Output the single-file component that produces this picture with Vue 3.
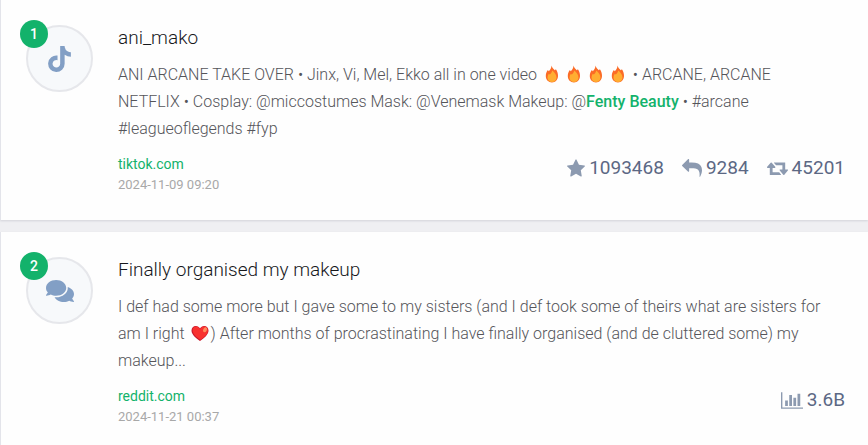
<script setup>
const icons = {
  tiktok: {
    box: '0 0 448 512',
    d: 'M448 209.91a210.06 210.06 0 0 1-122.77-39.25V349.38A162.55 162.55 0 1 1 185 188.31V278.2a74.62 74.62 0 1 0 52.23 71.18V0l88 0a121.18 121.18 0 0 0 1.86 22.17A122.18 122.18 0 0 0 381 102.39a121.43 121.43 0 0 0 67 20.14Z',
  },
  comments: {
    box: '0 32 576 448',
    d: 'M416 192c0-88.4-93.1-160-208-160S0 103.6 0 192c0 34.3 14.1 65.9 38 92-13.4 30.2-35.5 54.2-35.8 54.5-2.2 2.3-2.8 5.7-1.5 8.7S4.8 352 8 352c36.6 0 66.9-12.3 88.7-25 32.2 15.7 70.3 25 111.3 25 114.9 0 208-71.6 208-160zm122 220c23.9-26 38-57.7 38-92 0-66.9-53.5-124.2-129.3-148.1.9 6.6 1.3 13.3 1.3 20.1 0 105.9-107.7 192-240 192-10.8 0-21.3-.8-31.7-1.9C207.8 439.6 281.8 480 368 480c41 0 79.1-9.2 111.3-25 21.8 12.7 52.1 25 88.7 25 3.2 0 6.1-1.9 7.3-4.8 1.3-2.9.7-6.3-1.5-8.7-.3-.3-22.4-24.2-35.8-54.5z',
  },
  star: {
    box: '64 0 1664 1664',
    d: 'M1728 647q0 22-26 48l-363 354 86 500q1 7 1 20 0 21-10.5 35.5t-30.5 14.5q-19 0-40-12l-449-236-449 236q-22 12-40 12-21 0-31.5-14.5t-10.5-35.5q0-6 2-20l86-500-364-354q-25-27-25-48 0-37 56-46l502-73 225-455q19-41 49-41t49 41l225 455 502 73q56 9 56 46z',
  },
  reply: {
    box: '0 100 1792 1550',
    flip: 'matrix(-1 0 0 1 1792 0)',
    d: 'M1792 640q0 26-19 45l-512 512q-19 19-45 19t-45-19-19-45v-256h-224q-98 0-175.5 6t-154 21.5-133 42.5-105.5 69.5-80 101-48.5 138.5-17.5 181q0 55 5 123 0 6 2.5 23.5t2.5 26.5q0 15-8.5 25t-23.5 10q-16 0-28-17-7-9-13-22t-13.5-30-10.5-24q-127-285-127-451 0-199 53-333 162-403 875-403h224v-256q0-26 19-45t45-19 45 19l512 512q19 19 19 45z',
  },
  retweet: {
    box: '0 256 1920 1280',
    d: 'M1280 1504q0 13-9.5 22.5t-22.5 9.5h-960q-8 0-13.5-2t-9-7-5.5-8-3-11.5-1-11.5v-600h-192q-26 0-45-19t-19-45q0-24 15-41l320-384q19-22 49-22t49 22l320 384q15 17 15 41 0 26-19 45t-45 19h-192v384h576q16 0 25 11l160 192q7 10 7 21zm640-416q0 24-15 41l-320 384q-20 23-49 23t-49-23l-320-384q-15-17-15-41 0-26 19-45t45-19h192v-384h-576q-16 0-25-12l-160-192q-7-9-7-20 0-13 9.5-22.5t22.5-9.5h960q8 0 13.5 2t9 7 5.5 8 3 11.5 1 11.5v600h192q26 0 45 19t19 45z',
  },
  chart: {
    box: '0 128 2048 1536',
    d: 'M640 896v512h-256v-512h256zm384-512v1024h-256v-1024h256zm1024 1152v128h-2048v-1536h128v1408h1920zm-640-896v768h-256v-768h256zm384-384v1152h-256v-1152h256z',
  },
}

const posts = [
  {
    rank: 1,
    icon: 'tiktok',
    title: 'ani_mako',
    body: [
      { text: 'ANI ARCANE TAKE OVER • Jinx, Vi, Mel, Ekko all in one video ' },
      { emoji: 'fire' },
      { emoji: 'fire' },
      { emoji: 'fire' },
      { emoji: 'fire' },
      { text: ' • ARCANE, ARCANE NETFLIX • Cosplay: @miccostumes Mask: @Venemask Makeup: @' },
      { mark: 'Fenty Beauty' },
      { text: ' • #arcane #leagueoflegends #fyp' },
    ],
    site: 'tiktok.com',
    date: '2024-11-09 09:20',
    stats: [
      { icon: 'star', value: '1093468' },
      { icon: 'reply', value: '9284' },
      { icon: 'retweet', value: '45201' },
    ],
  },
  {
    rank: 2,
    icon: 'comments',
    title: 'Finally organised my makeup',
    body: [
      { text: 'I def had some more but I gave some to my sisters (and I def took some of theirs what are sisters for am I right ' },
      { emoji: 'heart' },
      { text: ') After months of procrastinating I have finally organised (and de cluttered some) my makeup...' },
    ],
    site: 'reddit.com',
    date: '2024-11-21 00:37',
    stats: [{ icon: 'chart', value: '3.6B' }],
  },
]
</script>

<template>
  <main class="feed">
    <article v-for="post in posts" :key="post.rank" class="card">
      <div class="avatar">
        <svg :class="['source', post.icon]" :viewBox="icons[post.icon].box" aria-hidden="true">
          <path :d="icons[post.icon].d" />
        </svg>
        <span class="rank">{{ post.rank }}</span>
      </div>
      <div class="content">
        <h2 class="title">{{ post.title }}</h2>
        <p class="body"><template v-for="(part, i) in post.body" :key="i"><svg v-if="part.emoji === 'fire'" class="emoji" viewBox="0 0 22 18" role="img" aria-label="fire"><path fill="#fb6b26" d="M10.6 0.5C10.9 2.8 12.6 3.7 13.8 5.3L14.9 4.2C16.3 6.2 17.1 8.5 17 11C16.8 14.9 14.3 17.4 11 17.4C7.4 17.4 4.9 14.9 4.8 11.3C4.7 8.8 5.6 6.7 6.9 5L7.8 6.2C9.4 4.7 10.3 3 10.6 0.5Z" /><path fill="#ffad31" d="M11.2 5.5C13.6 7.7 15.5 9.5 15.5 12.4C15.5 15.1 13.7 16.9 11 16.9C8.3 16.9 6.5 15.1 6.5 12.4C6.5 11 7 9.8 7.8 8.7L8.8 9.6C10 8.4 10.9 7.2 11.2 5.5Z" /></svg><svg v-else-if="part.emoji === 'heart'" class="emoji" viewBox="0 0 22 18" role="img" aria-label="heart"><path fill="#c9172b" d="M11 17C6.2 13.8 2.5 10.2 2.5 6.5C2.5 3.8 4.4 2 6.8 2C8.6 2 10.2 2.9 11 4.4C11.8 2.9 13.4 2 15.2 2C17.6 2 19.5 3.8 19.5 6.5C19.5 10.2 15.8 13.8 11 17Z" /><path fill="#f8312f" d="M11.3 15.7C7 13.1 3.6 9.8 3.6 6.3C3.6 4.1 5 2.6 7 2.6C9 2.6 10.3 3.7 11 5.5C11.8 3.6 13.2 2.6 15.1 2.6C17.5 2.6 19 4.3 19 6.5C19 10 15.7 13.1 11.3 15.7Z" /><ellipse cx="16" cy="5.8" rx="1.8" ry="2.6" fill="#ff8a5c" transform="rotate(28 16 5.8)" /></svg><strong v-else-if="part.mark" class="mark">{{ part.mark }}</strong><template v-else>{{ part.text }}</template></template></p>
        <footer class="meta">
          <div class="origin">
            <a class="site" href="#">{{ post.site }}</a>
            <time class="date">{{ post.date }}</time>
          </div>
          <ul class="stats">
            <li v-for="stat in post.stats" :key="stat.icon" class="stat">
              <svg :class="['glyph', stat.icon]" :viewBox="icons[stat.icon].box" aria-hidden="true">
                <path :d="icons[stat.icon].d" :transform="icons[stat.icon].flip" />
              </svg>
              <span>{{ stat.value }}</span>
            </li>
          </ul>
        </footer>
      </div>
    </article>
  </main>
</template>

<style>
body {
  margin: 0;
  background: #efeff2;
}
</style>

<style scoped>
.feed {
  display: flex;
  flex-direction: column;
  gap: 12px;
  font-family: Roboto, "Liberation Sans", sans-serif;
}
.card {
  display: flex;
  align-items: flex-start;
  gap: 25px;
  padding: 25px 23px 24px 25px;
  border-left: 1px solid #e3e4ea;
  background: #fefefe;
  box-shadow: 0 1px 2px rgba(40, 45, 70, 0.14);
}
.avatar {
  position: relative;
  display: flex;
  flex: none;
  align-items: center;
  justify-content: center;
  box-sizing: border-box;
  width: 67px;
  height: 67px;
  border: 2px solid #e6e7eb;
  border-radius: 50%;
  background: #f7f9fb;
}
.source {
  fill: #829fc5;
}
.source.tiktok {
  width: 23px;
  height: 26px;
}
.source.comments {
  width: 28px;
  height: 22px;
}
.rank {
  position: absolute;
  top: -7px;
  left: -8px;
  width: 28px;
  height: 28px;
  border-radius: 50%;
  background: #13b26b;
  color: #fff;
  font-size: 14px;
  font-weight: 500;
  line-height: 28px;
  text-align: center;
}
.content {
  flex: 1;
  min-width: 0;
}
.title {
  margin: 0 0 10px;
  color: #17181c;
  font-size: 19px;
  font-weight: 300;
  line-height: 26px;
}
.body {
  margin: 0 0 12px;
  padding-right: 12px;
  color: #55555a;
  font-size: 16px;
  font-weight: 300;
  line-height: 27px;
}
.emoji {
  width: 22px;
  height: 18px;
  vertical-align: -3px;
}
.mark {
  color: #13b26b;
  font-weight: 500;
}
.meta {
  display: flex;
  align-items: flex-start;
  justify-content: space-between;
}
.origin {
  display: flex;
  flex-direction: column;
}
.site {
  color: #13b26b;
  font-size: 14px;
  line-height: 20px;
  text-decoration: none;
}
.date {
  color: #a8a8a8;
  font-size: 13px;
  line-height: 22px;
}
.stats {
  display: flex;
  gap: 18px;
  margin: 0;
  padding: 0;
  list-style: none;
}
.stat {
  display: flex;
  align-items: center;
  gap: 4px;
  color: #5c6884;
  font-size: 19px;
  line-height: 28px;
}
.glyph {
  height: 18px;
  fill: #8c9ab0;
}
.glyph.star {
  width: 18px;
}
.glyph.reply {
  width: 20px;
}
.glyph.retweet {
  width: 21px;
  height: 14px;
}
.glyph.chart {
  width: 22px;
  height: 17px;
}
</style>
